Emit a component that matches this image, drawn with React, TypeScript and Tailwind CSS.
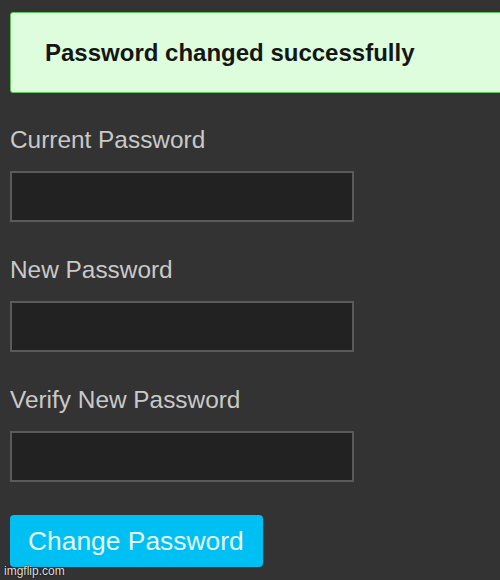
export default function App() {
  const font = { fontFamily: '"Liberation Sans", Arial, sans-serif' };
  const fields = ["Current Password", "New Password", "Verify New Password"];
  return (
    <div
      className="relative w-[500px] h-[580px] overflow-hidden bg-[#333333] pl-[10px] pt-[12px]"
      style={font}
    >
      <div className="flex h-[81px] w-[500px] items-center rounded-[3px] border border-[#5fc95f] bg-[#ddfddd] pl-[34px]">
        <span className="text-[24px] font-bold leading-[28px] text-[#151515]">
          Password changed successfully
        </span>
      </div>
      {fields.map((f, i) => (
        <div key={f} className={i === 0 ? "mt-[33px]" : "mt-[34px]"}>
          <div className="text-[24.4px] leading-[28px] text-[#c9c9c9]">{f}</div>
          <div className="mt-[17px] h-[51px] w-[344px] border-2 border-[#5a5a5a] bg-[#222222]" />
        </div>
      ))}
      <button className="mt-[33px] flex h-[52px] w-[253px] items-center rounded-[4px] bg-[#00bff2] pl-[18px] text-[26.4px] leading-[30px] text-[#e6f9ff]">
        Change Password
      </button>
      <div className="absolute bottom-[2px] left-[4px] text-[12px] leading-[14px] text-[#dddddd] [text-shadow:0_0_2px_#000]">
        imgflip.com
      </div>
    </div>
  );
}
